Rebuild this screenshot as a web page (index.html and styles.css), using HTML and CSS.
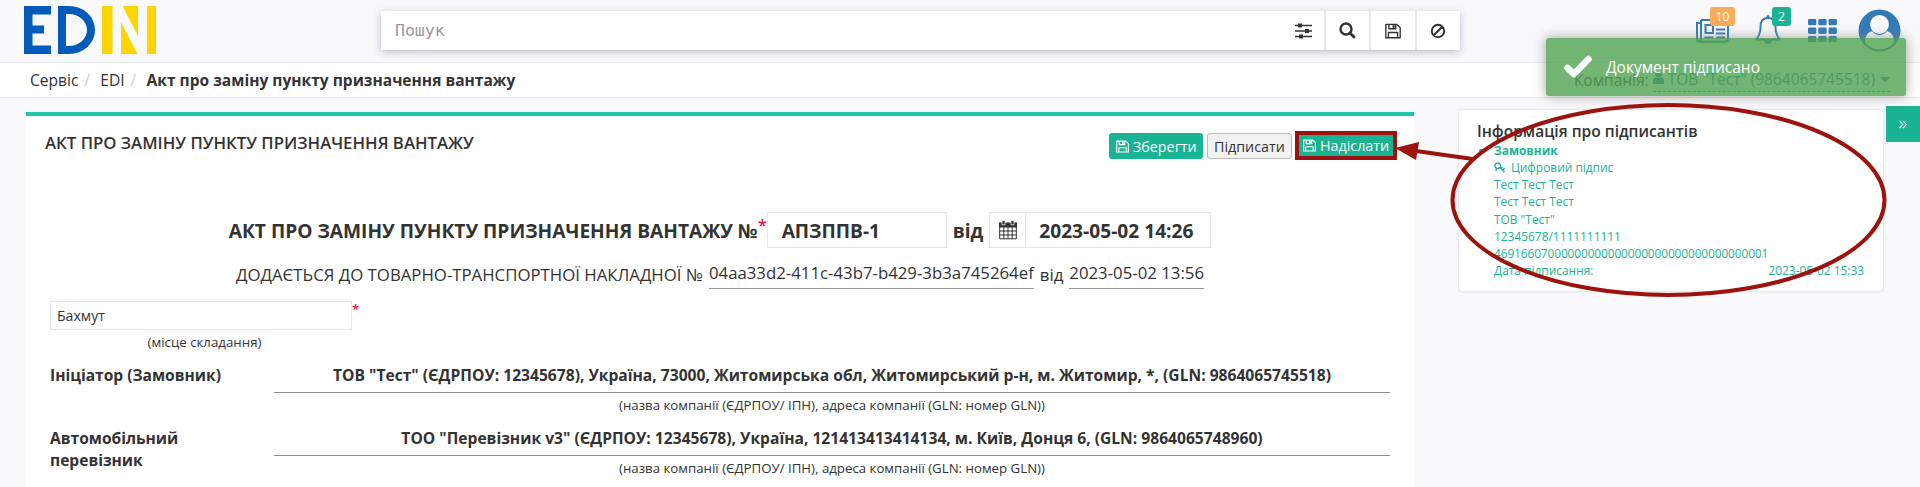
FILE: index.html
```html
<!DOCTYPE html>
<html lang="uk">
<head>
<meta charset="utf-8">
<title>EDIN</title>
<link rel="stylesheet" href="styles.css">
</head>
<body>
<svg class="defs" width="0" height="0">
  <symbol id="floppy" viewBox="0 0 14 14">
    <path d="M.7 1.2H10.4L13.3 4V12.9H.7Z M3.4 1.2V5H9.4V1.2 M3 12.9V8.3H11V12.9" fill="none" stroke="currentColor" stroke-width="1.2" stroke-linejoin="round"/>
    <path d="M6.6 1.8H8.4V4.3H6.6Z" fill="currentColor"/>
  </symbol>
</svg>

<header class="topbar">
  <div class="logo" role="img" aria-label="EDIN">
    <svg class="logo-e" width="27" height="48"><rect width="8.500" height="48"/><rect width="27" height="8.500"/><rect y="19.500" width="20" height="8"/><rect y="39.500" width="27" height="8.500"/></svg>
    <div class="logo-d"></div>
    <svg class="logo-in" width="54" height="48"><rect width="10.500" height="48"/><path d="M20.500 0H36V30Z M19 16L35.500 48H19Z"/><rect x="45" width="9" height="48"/></svg>
  </div>
  <div class="search">
    <span class="search-input">Пошук</span>
    <span class="search-filter"><svg width="18" height="16" viewBox="0 0 18 16"><path d="M0 2.500H17M0 8H17M0 13.500H17" stroke="#333" stroke-width="1.500"/><path d="M3 .5h4v4H3zM10 6h4v4h-4zM4 11.500h4v4H4z" fill="#333"/></svg></span>
    <span class="search-btn"><svg width="17" height="17" viewBox="0 0 17 17"><circle cx="7" cy="7" r="5.500" fill="none" stroke="#333" stroke-width="2.400"/><path d="M11 11L15 15" stroke="#333" stroke-width="2.800" stroke-linecap="round"/></svg></span>
    <span class="search-btn"><svg width="16" height="16"><use href="#floppy"/></svg></span>
    <span class="search-btn"><svg width="16" height="16" viewBox="0 0 16 16"><path d="M14.200 8A6.200 6.200 0 1 1 1.800 8A6.200 6.200 0 1 1 14.200 8M3.800 12.200L12.200 3.800" fill="none" stroke="#333" stroke-width="2"/></svg></span>
  </div>
  <div class="tools">
    <span class="tool news"><svg width="33" height="24" viewBox="0 0 33 24"><g fill="none" stroke="currentColor" stroke-width="2"><path d="M5 1H32V20Q32 22.800 29 22.800H4Q1 22.800 1 20V4H5M5 1V19Q5 22 3 22.500"/><path d="M9.500 6H17V14H9.500Z M20 6H29M20 10.500H29M20 14.500H29M8.500 18.500H17.500M20 18.500H29"/></g></svg><b class="badge orange">10</b></span>
    <span class="tool bell"><svg width="26" height="30" viewBox="0 0 26 30"><path d="M13 3C7.500 3 5.500 7 5.500 12C5.500 18 4 21.500 1 24.500H25C22 21.500 20.500 18 20.500 12C20.500 7 18.500 3 13 3Z" fill="none" stroke="currentColor" stroke-width="1.900" stroke-linejoin="round"/><path d="M11.500 3V1.500a1.500 1.500 0 0 1 3 0V3M9 25H17A4 4 0 0 1 9 25" fill="currentColor"/></svg><b class="badge green">2</b></span>
    <svg class="apps" width="29" height="23" viewBox="0 0 29 23" fill="currentColor"><rect width="8.300" height="6.300" rx="1.300"/><rect x="10.300" width="8.300" height="6.300" rx="1.300"/><rect x="20.600" width="8.300" height="6.300" rx="1.300"/><rect y="8.600" width="8.300" height="6.300" rx="1.300"/><rect x="10.300" y="8.600" width="8.300" height="6.300" rx="1.300"/><rect x="20.600" y="8.600" width="8.300" height="6.300" rx="1.300"/><rect y="17" width="8.300" height="6" rx="1.300"/><rect x="10.300" y="17" width="8.300" height="6" rx="1.300"/><rect x="20.600" y="17" width="8.300" height="6" rx="1.300"/></svg>
    <svg class="avatar" width="43" height="43" viewBox="0 0 43 43"><circle cx="21.500" cy="21.500" r="21" fill="#337ab7"/><path d="M7 34C7 27.500 9.500 23 14 22.300Q21.500 30 29 22.300C33.500 23 36 27.500 36 34Q30 40.500 21.500 40.500T7 34Z" fill="#f9f9fb"/><circle cx="21.500" cy="15.500" r="9.400" fill="#f9f9fb"/></svg>
  </div>
</header>

<nav class="crumbs">
  <div class="path"><span>Сервіс</span><i>/</i><span>EDI</span><i>/</i><strong>Акт про заміну пункту призначення вантажу</strong></div>
  <div class="company">
    <span>Компанія:</span>
    <span class="company-link"><svg width="11" height="13" viewBox="0 0 11 13" fill="currentColor"><circle cx="5.500" cy="3.300" r="3.300"/><path d="M0 13V10Q0 6.300 3 6.200Q5.500 8 8 6.200Q11 6.300 11 10V13Z"/></svg><span class="company-name">ТОВ "Тест" (9864065745518)</span><i class="caret"></i></span>
  </div>
</nav>

<div class="layout">
  <main class="doc">
    <div class="doc-head">
      <h1>АКТ ПРО ЗАМІНУ ПУНКТУ ПРИЗНАЧЕННЯ ВАНТАЖУ</h1>
      <div class="actions">
        <span class="btn save"><svg width="13" height="13"><use href="#floppy"/></svg>Зберегти</span>
        <span class="btn sign">Підписати</span>
        <span class="btn send"><svg width="13" height="13"><use href="#floppy"/></svg>Надіслати</span>
      </div>
    </div>
    <div class="row-title">
      <span class="t-label">АКТ ПРО ЗАМІНУ ПУНКТУ ПРИЗНАЧЕННЯ ВАНТАЖУ №</span><sup>*</sup>
      <span class="num">АПЗППВ-1</span>
      <span class="from">від</span>
      <span class="date"><span class="cal"><svg width="18" height="20" viewBox="0 0 18 20"><path d="M.7 4V18.800H17.300V4M.7 11H17.300M.7 15H17.300M4.800 7V19M9 7V19M13.200 7V19" fill="none" stroke="#333" stroke-width="1"/><path d="M0 2.500H18V7.500H0Z" fill="#333"/><path d="M3 .6H6V4.800H3ZM12 .6H15V4.800H12Z" fill="#333" stroke="#fff" stroke-width=".7"/></svg></span><span class="date-val">2023-05-02 14:26</span></span>
    </div>
    <div class="row-ttn">
      <span class="lbl">ДОДАЄТЬСЯ ДО ТОВАРНО-ТРАНСПОРТНОЇ НАКЛАДНОЇ №</span>
      <span class="val">04aa33d2-411c-43b7-b429-3b3a745264ef</span>
      <span class="lbl">від</span>
      <span class="val">2023-05-02 13:56</span>
    </div>
    <div class="place">
      <div class="place-row"><span class="place-input">Бахмут</span><sup>*</sup></div>
      <div class="place-hint">(місце складання)</div>
    </div>
    <div class="party">
      <div class="p-name">Ініціатор (Замовник)</div>
      <div><div class="p-val">ТОВ "Тест" (ЄДРПОУ: 12345678), Україна, 73000, Житомирська обл, Житомирський р-н, м. Житомир, *, (GLN: 9864065745518)</div>
      <div class="p-hint">(назва компанії (ЄДРПОУ/ ІПН), адреса компанії (GLN: номер GLN))</div></div>
    </div>
    <div class="party">
      <div class="p-name">Автомобільний<br>перевізник</div>
      <div><div class="p-val">ТОО "Перевізник v3" (ЄДРПОУ: 12345678), Україна, 121413413414134, м. Київ, Донця 6, (GLN: 9864065748960)</div>
      <div class="p-hint">(назва компанії (ЄДРПОУ/ ІПН), адреса компанії (GLN: номер GLN))</div></div>
    </div>
  </main>

  <aside class="signers">
    <h2>Інформація про підписантів</h2>
    <ul>
      <li>
        <strong>Замовник</strong>
        <div class="sig"><svg width="12" height="11" viewBox="0 0 12 11"><path d="M3.800 1A2.800 2.800 0 1 1 3.700 1M1.500 8.500L3.200 6M5.700 5.500L10.500 10M8.600 8.200L10.600 6.200M6.700 6.500L8.300 4.900" fill="none" stroke="currentColor" stroke-width="1.400"/></svg>Цифровий підпис</div>
        <div>Тест Тест Тест</div>
        <div>Тест Тест Тест</div>
        <div>ТОВ "Тест"</div>
        <div>12345678/1111111111</div>
        <div class="serial">46916607000000000000000000000000000000001</div>
        <div class="signed"><span>Дата підписання:</span><span>2023-05-02 15:33</span></div>
      </li>
    </ul>
  </aside>
  <div class="collapse"><svg width="8" height="9" viewBox="0 0 9 10"><path d="M.7 1L4.300 5L.7 9M4.700 1L8.300 5L4.700 9" fill="none" stroke="#fff" stroke-width="1.200"/></svg></div>
</div>

<div class="toast"><svg width="28" height="23" viewBox="0 0 28 23"><path d="M3.500 13L10 19L24.500 4" fill="none" stroke="#fff" stroke-width="6.500" stroke-linecap="round" stroke-linejoin="round"/></svg><span>Документ підписано</span></div>

<svg class="annotation" width="1920" height="487" viewBox="0 0 1920 487">
  <ellipse cx="1668.500" cy="200" rx="216" ry="95" fill="none" stroke="#9c120c" stroke-width="4"/>
  <path d="M1473 159L1416 151" stroke="#9c120c" stroke-width="4"/>
  <path d="M1395 148L1419 142L1416 160Z" fill="#9c120c"/>
</svg>
</body>
</html>
```
FILE: styles.css
```css
* { box-sizing: border-box; }
body {
  margin: 0;
  height: 487px;
  overflow: hidden;
  position: relative;
  background: #f9f9fb;
  color: #333;
  font-family: "Open Sans", "Noto Sans", sans-serif;
  white-space: nowrap;
}
.defs { position: absolute; }
svg { display: block; flex: none; }
i { font-style: normal; }

.topbar { height: 62px; display: flex; align-items: flex-start; }
.logo { display: flex; width: 381px; margin-top: 6px; padding-left: 24px; }
.logo-e { fill: #005bbb; margin-right: 7px; }
.logo-d { width: 37px; height: 48px; margin-right: 7px; border: 8.5px solid #005bbb; border-radius: 0 26px 26px 0 / 0 24px 24px 0; }
.logo-in { fill: #ffd500; }

.search {
  display: flex;
  width: 1079px;
  height: 39px;
  margin-top: 11px;
  background: #fff;
  box-shadow: 0 2px 8px rgba(90, 95, 140, .4);
}
.search-input { flex: 1; padding-left: 14px; font: 16.500px/39px "DejaVu Sans Mono", monospace; color: #999; }
.search-filter, .search-btn { display: flex; align-items: center; justify-content: center; }
.search-filter { width: 39px; padding-top: 1px; }
.search-btn { width: 45.500px; border-left: 2px solid #e7e7e9; }

.tools { display: flex; color: #337ab7; margin-left: 236px; }
.tool { position: relative; }
.news { margin-top: 19px; }
.bell { margin: 15px 0 0 26px; }
.apps { margin: 19px 0 0 27px; }
.avatar { margin: 9px 0 0 21px; }
.badge { position: absolute; height: 19px; border-radius: 3px; color: #fff; font-size: 12px; font-weight: 500; line-height: 19px; text-align: center; }
.orange { left: 14px; top: -12px; width: 25px; background: #f8ac59; }
.green { left: 17px; top: -8px; width: 19px; background: #1ab394; }

.crumbs {
  display: flex;
  justify-content: space-between;
  height: 36px;
  padding: 0 30px 0 30px;
  background: #fff;
  border: solid #e4e6eb;
  border-width: 1px 0;
  line-height: 34px;
}
.path { display: flex; font-size: 15.560px; }
.path i { color: #ccc; margin: 0 11px 0 6px; width: 5px; }
.company { display: flex; font-size: 15.500px; }
.company-link { display: flex; align-items: center; height: 29px; margin-left: 4px; color: #337ab7; border-bottom: 1px dashed #337ab7; }
.company-name { margin: 4px 5px 0 4px; }
.caret { border: solid transparent; border-width: 5px 5px 0; border-top-color: #337ab7; margin-top: 4px; }

.layout { display: flex; padding: 14px 0 0 26px; align-items: flex-start; }
.doc { width: 1388px; height: 380px; background: #fff; border-top: 4px solid #1fc5a8; padding: 0 24px; }
.doc-head { display: flex; justify-content: space-between; margin: 0 -7px 0 -5px; height: 96px; }
h1 { margin: 16px 0 0; font-size: 16.750px; font-weight: 600; line-height: 22px; }
.actions { display: flex; gap: 4px; padding-top: 15px; }
.btn { display: flex; align-items: center; height: 30px; gap: 4px; font-size: 14.300px; color: #fff; }
.save { width: 94px; height: 26px; margin-top: 2px; padding-left: 7px; background: #1ab394; border-radius: 3px; }
.sign { width: 85px; height: 26px; margin-top: 2px; padding-left: 6px; color: #333; background: #f2f2f2; border: 1px solid #bbb; border-radius: 3px; }
.send { width: 102px; height: 29px; background: #1ab394; border: 4px solid #9c120c; padding-left: 4px; margin-left: -1px; }

.row-title { display: flex; justify-content: center; height: 50px; font-size: 19.170px; font-weight: 700; line-height: 38px; }
sup { color: #e8174b; font-size: 15px; font-weight: 600; line-height: 18px; width: 8px; text-align: center; vertical-align: top; }
.row-title sup { width: 9px; margin-top: 3px; font-size: 17px; line-height: 20px; }
.num { width: 180px; height: 36px; padding-left: 14px; border: 1px solid #e5e6e7; line-height: 36px; }
.from { margin: 0 6px; }
.date { display: flex; width: 222px; height: 36px; border: 1px solid #e5e6e7; line-height: 36px; }
.cal { width: 36px; display: flex; align-items: center; justify-content: center; border-right: 1px solid #e5e6e7; }
.date-val { padding-left: 13px; }

.row-ttn { display: flex; justify-content: center; align-items: flex-start; gap: 6px; height: 39px; font-size: 16.800px; }
.lbl { line-height: 25px; }
.val { line-height: 21px; padding-bottom: 5px; border-bottom: 1px solid #999; }

.place { width: 309px; height: 63px; }
.place-row { display: flex; }
.place-input { width: 302px; height: 29px; padding-left: 6px; border: 1px solid #e5e6e7; font-size: 14.100px; line-height: 28px; }
.place-row sup { line-height: 16px; width: 6px; font-size: 13px; }
.place-hint { text-align: center; font-size: 13.290px; line-height: 24px; }

.party { display: grid; grid-template-columns: 224px 1fr; height: 63px; }
.p-name { font-size: 15.570px; font-weight: 700; line-height: 22px; }
.p-val { height: 29px; border-bottom: 1px solid #8f8f8f; text-align: center; font-size: 15.610px; font-weight: 700; line-height: 22px; }
.p-hint { text-align: center; font-size: 13.250px; line-height: 24px; }

.signers { width: 424px; height: 181px; margin: -2px 0 0 45px; padding: 10px 19px 0 18px; background: #fff; border-radius: 4px; box-shadow: 0 0 3px rgba(0, 0, 0, .18); }
h2 { margin: 0; font-size: 15.550px; font-weight: 600; line-height: 22px; }
ul { margin: 0; padding: 0 0 0 17px; color: #1ab394; font-size: 11.920px; line-height: 17.140px; }
strong { font-weight: 700; }
.sig { display: flex; align-items: center; gap: 5px; }
.serial { letter-spacing: -.12px; }
.signed { display: flex; justify-content: space-between; }
.collapse { width: 34px; height: 36px; margin: -6px 0 0 3px; background: #1ab394; display: flex; align-items: center; justify-content: center; }

.toast {
  position: absolute;
  left: 1546px;
  top: 38px;
  width: 360px;
  height: 58px;
  display: flex;
  align-items: center;
  gap: 14px;
  padding-left: 18px;
  background: #51a351;
  border-radius: 3px;
  box-shadow: 0 0 12px #888;
  opacity: .8;
  color: #fff;
  font-size: 15.500px;
}
.toast svg { margin-bottom: 1px; }
.annotation { position: absolute; left: 0; top: 0; }
```
